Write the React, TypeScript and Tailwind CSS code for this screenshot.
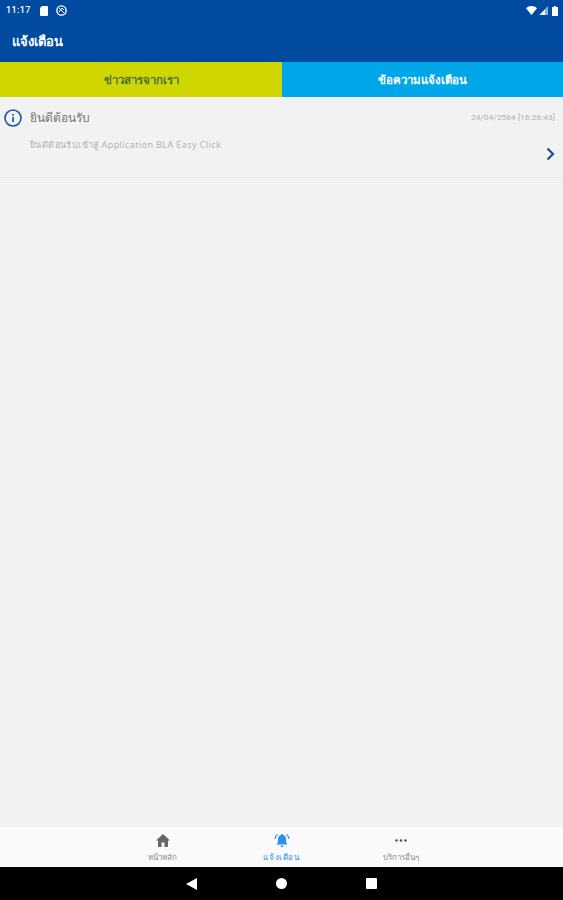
const thai = { fontFamily: '"Noto Sans", "Noto Sans CJK SC", "DejaVu Sans", sans-serif' };

function StatusBar() {
  return (
    <div className="h-[21px] flex items-center justify-between pl-[6px] pr-[5px] text-white">
      <div className="flex items-center gap-[9px]">
        <span className="text-[9px] font-medium font-['Roboto',sans-serif] tracking-[0.4px]">11:17</span>
        <svg width="8" height="10" viewBox="0 0 8 10" fill="white">
          <path d="M2 0h5a1 1 0 0 1 1 1v8a1 1 0 0 1-1 1H1a1 1 0 0 1-1-1V2z" />
        </svg>
        <svg className="-ml-[1px]" width="11" height="11" viewBox="0 0 11 11" fill="none" stroke="white" strokeWidth="1.4">
          <circle cx="5.5" cy="5.5" r="4.6" />
          <path d="M3 3l5 5M3 7l3-4 2 2" strokeWidth="1" />
        </svg>
      </div>
      <div className="flex items-center gap-[2px]">
        <svg width="11" height="9" viewBox="0 0 11 9" fill="white"><path d="M0 2.2C3-.7 8-.7 11 2.2L5.5 9z" /></svg>
        <svg width="9" height="9" viewBox="0 0 9 9"><path d="M9 0v9H0z" fill="white" fillOpacity="0.55" /><path d="M6 3.5v5.5H1z" fill="white" /></svg>
        <svg className="ml-[2px]" width="6" height="10" viewBox="0 0 6 10" fill="white"><path d="M2 0h2v1h2v9H0V1h2z" /></svg>
      </div>
    </div>
  );
}

function NavItem({ label, active, children }: { label: string; active?: boolean; children: React.ReactNode }) {
  return (
    <div className="w-[119px] flex flex-col items-center">
      <div className="h-[18px] flex items-center justify-center">{children}</div>
      <span style={thai} className={`text-[8px] leading-[12px] mt-[2px] ${active ? 'text-[#2f8df0] tracking-[0.6px]' : 'text-[#8a8a8a]'}`}>{label}</span>
    </div>
  );
}

export default function App() {
  return (
    <div className="w-[563px] h-[900px] flex flex-col bg-[#f2f2f2] overflow-hidden">
      <div className="bg-[#004a9f]">
        <StatusBar />
        <div style={thai} className="h-[41px] pl-[12px] flex items-center text-white text-[13px] font-semibold">แจ้งเตือน</div>
      </div>

      <div style={thai} className="h-[35px] flex text-[11.5px] font-semibold">
        <div className="w-[282px] bg-[#cfd600] text-[#4f7040] flex items-center justify-center">ข่าวสารจากเรา</div>
        <div className="flex-1 bg-[#00a7e8] text-white flex items-center justify-center">ข้อความแจ้งเตือน</div>
      </div>

      <div className="h-[81px] border-b border-[#e6e6e6] pl-[4px] pr-[8px] pt-[12px] flex flex-col">
        <div className="flex items-center h-[18px]">
          <svg width="18" height="18" viewBox="0 0 18 18" fill="none">
            <circle cx="9" cy="9" r="8" stroke="#1c56a3" strokeWidth="1.6" />
            <rect x="8.2" y="8" width="1.7" height="5" fill="#1c56a3" />
            <rect x="8.2" y="5" width="1.7" height="1.7" fill="#1c56a3" />
          </svg>
          <span style={thai} className="ml-[8px] text-[12px] text-[#777777]">ยินดีต้อนรับ</span>
          <span className="ml-auto text-[8px] text-[#b0b0b0] font-['Roboto',sans-serif] tracking-[0.2px]">24/04/2564 [16:26:43]</span>
        </div>
        <div className="flex">
          <span style={thai} className="ml-[26px] mt-[11px] text-[9px] leading-[14px] text-[#b2b2b2] tracking-[0.4px]">ยินดีต้อนรับเข้าสู่ Application BLA Easy Click</span>
          <svg className="ml-auto mt-[20px]" width="9" height="14" viewBox="0 0 9 14" fill="none" stroke="#1f4c9a" strokeWidth="2.2">
            <path d="M1.5 1.5L7 7l-5.5 5.5" />
          </svg>
        </div>
      </div>

      <div className="flex-1" />

      <div className="h-[40px] bg-[#fafafa] flex justify-center pt-[4px]">
        <NavItem label="หน้าหลัก">
          <svg width="14" height="13" viewBox="0 0 14 13" fill="#666666"><path d="M7 0l7 6.5h-2V13H8.5V8.5h-3V13H2V6.5H0z" /></svg>
        </NavItem>
        <NavItem label="แจ้งเตือน" active>
          <svg width="16" height="15" viewBox="0 0 16 15" fill="#2f8df0">
            <path d="M8 1a1 1 0 0 1 1 1c2 .5 3 2 3 4v3l1.500 2.500h-11L4 9V6c0-2 1-3.500 3-4a1 1 0 0 1 1-1zM6.500 12.500h3a1.500 1.500 0 0 1-3 0z" />
            <path d="M3.500 1.500C2 2.500 1 4 1 6M12.500 1.500C14 2.500 15 4 15 6" fill="none" stroke="#2f8df0" strokeWidth="1.2" />
          </svg>
        </NavItem>
        <NavItem label="บริการอื่นๆ">
          <svg width="12" height="3" viewBox="0 0 12 3" fill="#555555"><circle cx="1.500" cy="1.500" r="1.300" /><circle cx="6" cy="1.500" r="1.300" /><circle cx="10.500" cy="1.500" r="1.300" /></svg>
        </NavItem>
      </div>

      <div className="h-[33px] bg-black flex items-center justify-center gap-[79px]">
        <svg width="11" height="12" viewBox="0 0 11 12" fill="white"><path d="M11 0v12L0 6z" /></svg>
        <div className="w-[11px] h-[11px] rounded-full bg-white" />
        <div className="w-[11px] h-[11px] rounded-[1px] bg-white" />
      </div>
    </div>
  );
}
